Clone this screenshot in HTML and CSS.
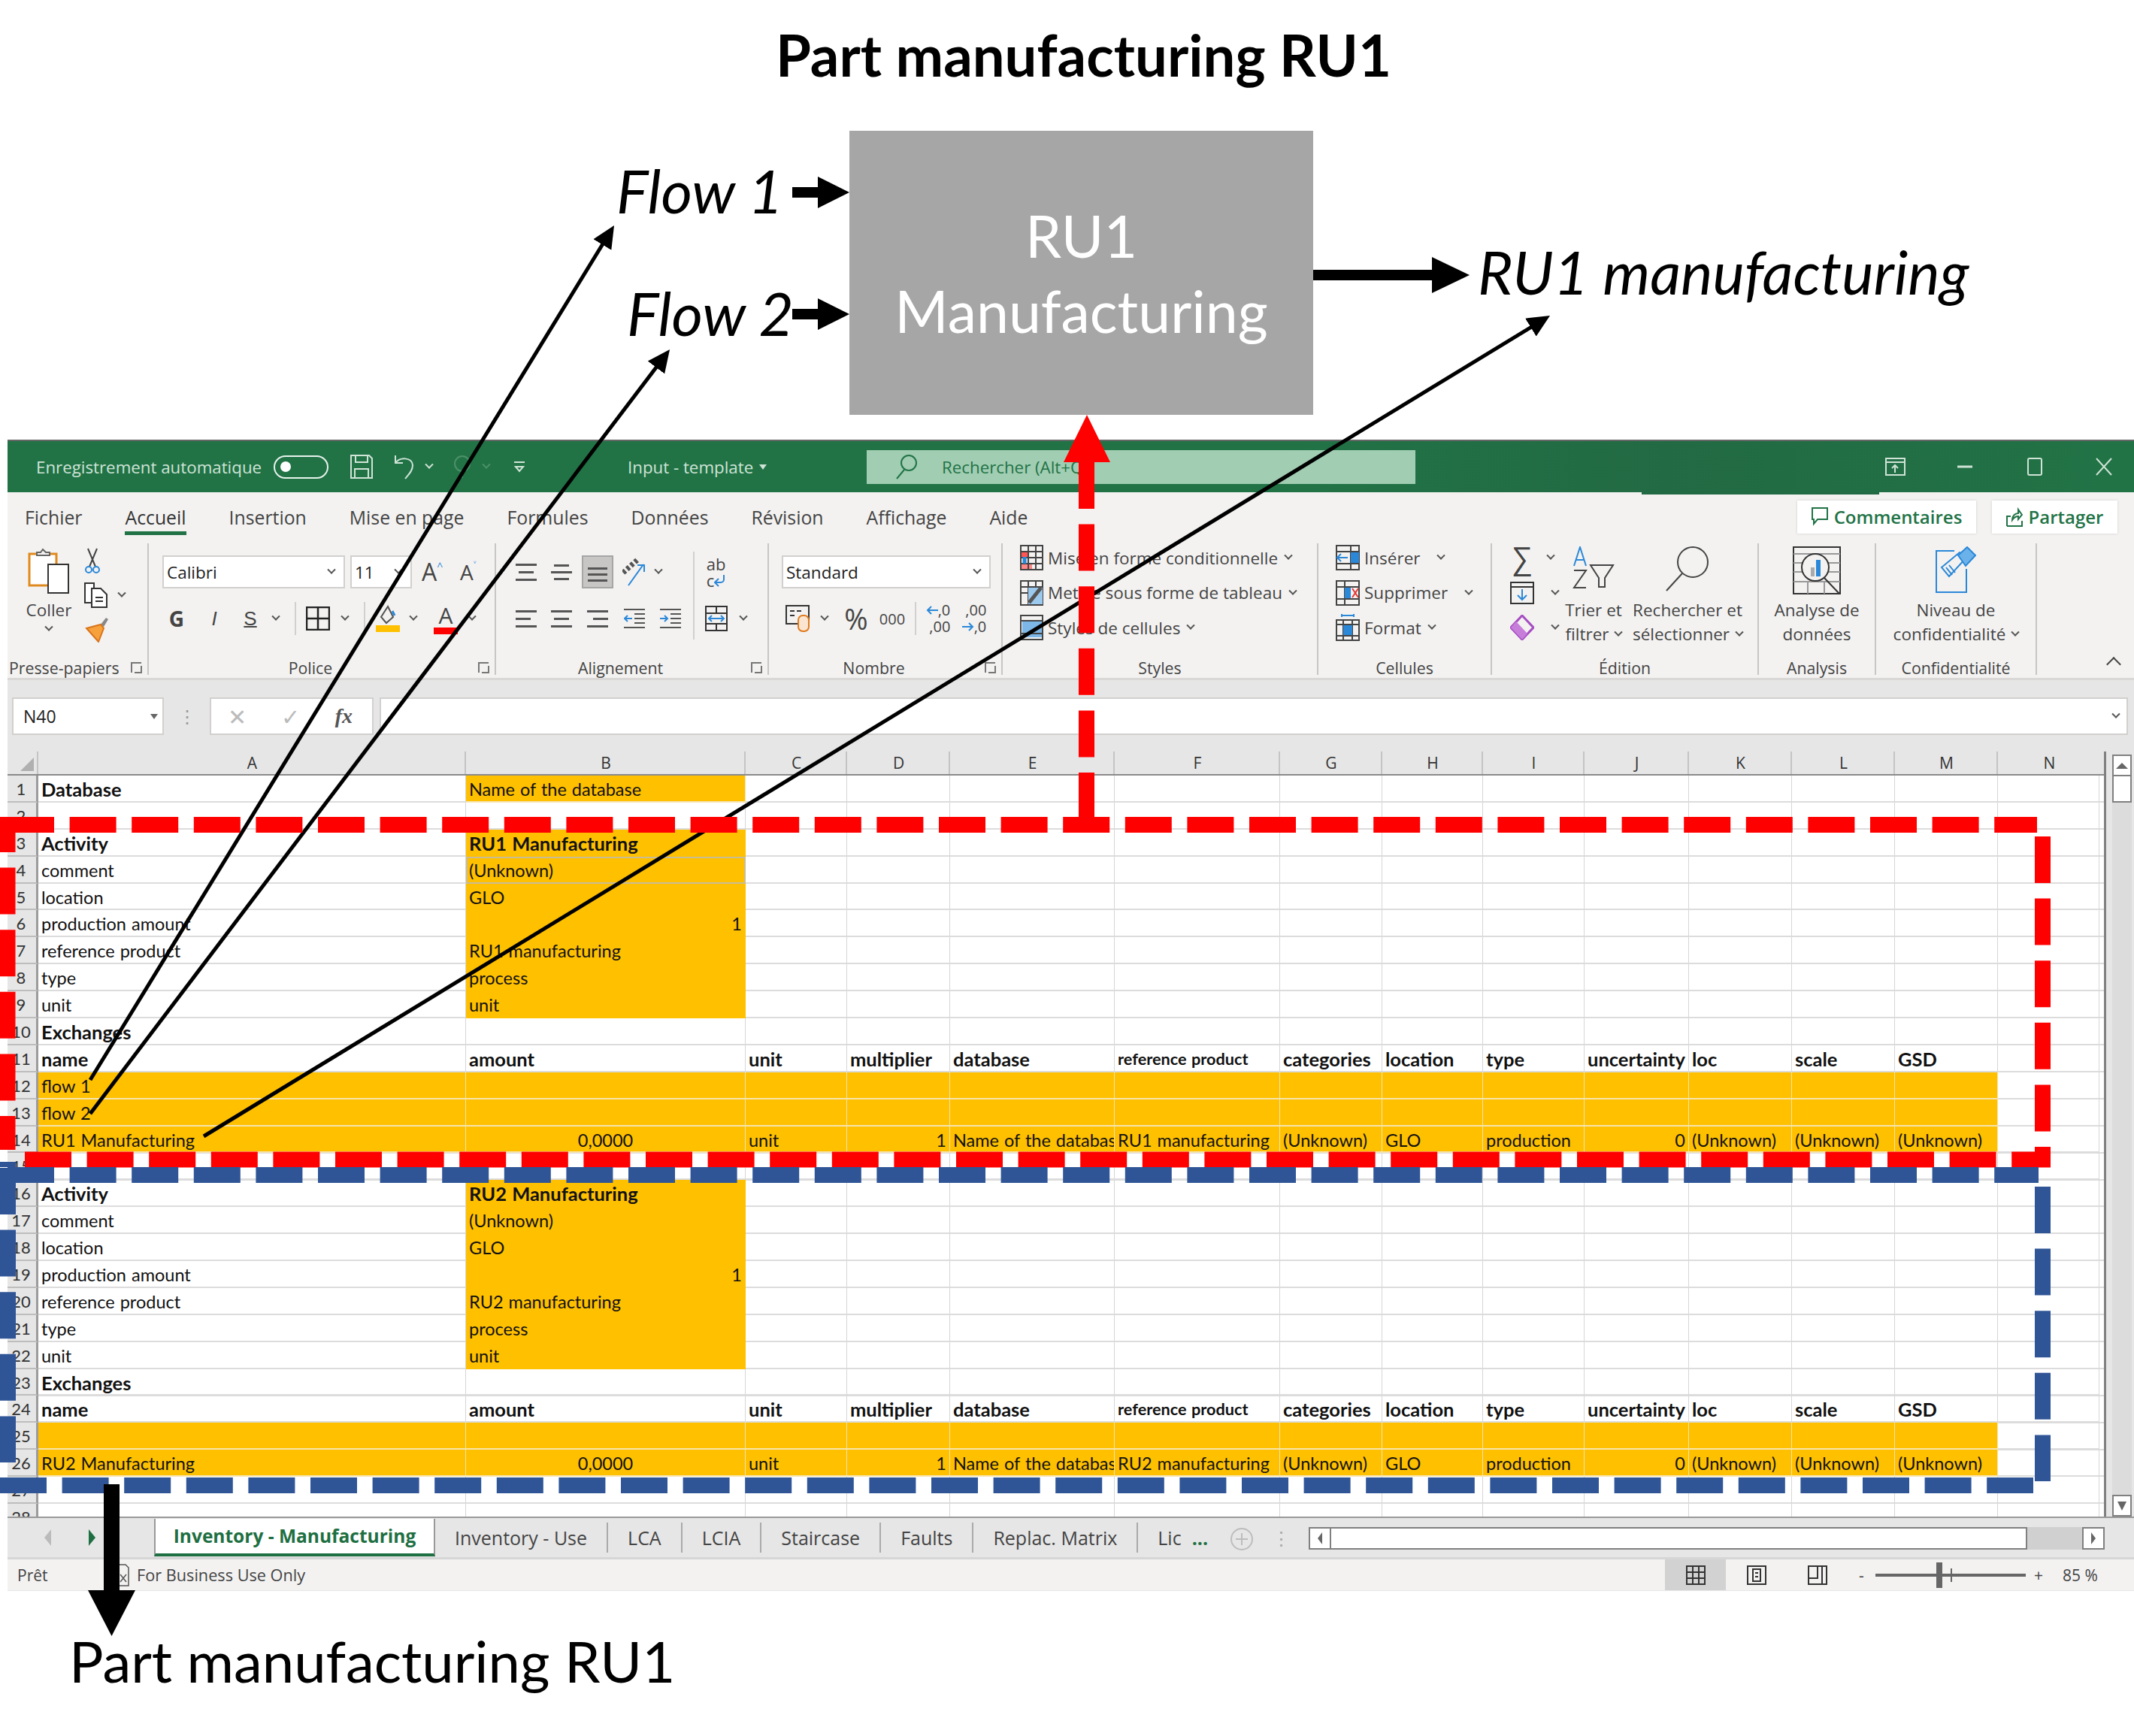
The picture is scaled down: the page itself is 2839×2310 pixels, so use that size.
FILE: index.html
```html
<!DOCTYPE html>
<html>
<head>
    <meta charset="UTF-8">
    <title>Part manufacturing RU1</title>
    <link rel="stylesheet" href="styles.css">
</head>
<body>
<div class="page">
    <!-- diagram above the sheet -->
    <div class="top">
        <h1 class="title">Part manufacturing RU1</h1>
        <div class="ru-box">RU1<br>Manufacturing</div>
        <div class="lbl lbl-flow1">Flow 1</div>
        <div class="lbl lbl-flow2">Flow 2</div>
        <div class="lbl lbl-out">RU1 manufacturing</div>
    </div>

    <div class="excel">
        <!-- title bar -->
        <div class="titlebar">
            <div class="tb-left">
                <span class="auto-label">Enregistrement automatique</span>
                <span class="toggle"><i></i></span>
                <svg class="ic-save" width="30" height="32" viewBox="0 0 30 32" fill="none" stroke="#cfe3d6" stroke-width="2"><path d="M1 1h24l4 4v26H1z"/><path d="M7 1v9h16V1M6 31V19h18v12"/></svg>
                <svg class="ic-undo" width="28" height="34" viewBox="0 0 28 34" fill="none" stroke="#cfe3d6" stroke-width="2"><path d="M2 2v10h10"/><path d="M2 12c6-8 22-8 23 3 0 8-6 13-10 18"/></svg>
                <span class="chev chev-light chev-undo"></span>
                <svg class="ic-redo" width="25" height="32" viewBox="0 0 25 32" fill="none" stroke="#4c9069" stroke-width="2"><circle cx="12" cy="12" r="10"/><path d="M12 22v9"/></svg>
                <span class="chev chev-dim chev-redo"></span>
                <svg width="14" height="16" viewBox="0 0 14 16" fill="none" stroke="#cfe3d6" stroke-width="2"><path d="M0 2h14M2 8l5 6 5-6z"/></svg>
            </div>
            <div class="tb-file">Input - template <span class="caret"></span></div>
            <div class="search">
                <svg width="30" height="34" viewBox="0 0 30 34" fill="none" stroke="#217346" stroke-width="2"><circle cx="18" cy="12" r="10"/><path d="M12 21L2 33"/></svg>
                <span>Rechercher (Alt+Q)</span>
            </div>
            <div class="tb-right">
                <svg width="27" height="24" viewBox="0 0 27 24" fill="none" stroke="#cfe3d6" stroke-width="2"><path d="M1 1h25v22H1zM1 6h25M13 20V10M9 14l4-4 4 4"/></svg>
                <svg class="win-min" width="20" height="4" viewBox="0 0 20 4"><path d="M0 2h20" stroke="#cfe3d6" stroke-width="3"/></svg>
                <svg class="win-max" width="20" height="24" viewBox="0 0 20 24" fill="none" stroke="#cfe3d6" stroke-width="2"><rect x="1" y="1" width="18" height="22" rx="2"/></svg>
                <svg class="win-close" width="22" height="24" viewBox="0 0 22 24" fill="none" stroke="#cfe3d6" stroke-width="2"><path d="M1 1l20 22M21 1L1 23"/></svg>
            </div>
        </div>

        <!-- ribbon tabs -->
        <div class="tabs">
            <span class="tab">Fichier</span>
            <span class="tab tab-on">Accueil</span>
            <span class="tab">Insertion</span>
            <span class="tab">Mise en page</span>
            <span class="tab">Formules</span>
            <span class="tab">Données</span>
            <span class="tab">Révision</span>
            <span class="tab">Affichage</span>
            <span class="tab">Aide</span>
            <span class="tab-btns">
                <span class="share share-c">
                    <svg width="22" height="26" viewBox="0 0 22 26" fill="none" stroke="#217346" stroke-width="2"><path d="M1 1h20v15H8l-5 6v-6H1z"/></svg>
                    Commentaires
                </span>
                <span class="share share-p">
                    <svg width="22" height="26" viewBox="0 0 22 26" fill="none" stroke="#217346" stroke-width="2"><path d="M1 25V12h5M1 25h20v-7M8 17c0-6 4-9 8-9V3l5 7-5 6v-4c-3 0-6 2-8 5z"/></svg>
                    Partager
                </span>
            </span>
        </div>

        <!-- ribbon -->
        <div class="ribbon">
            <!-- Presse-papiers -->
            <div class="grp grp-clip">
                <div class="grp-body clip-body">
                    <div class="paste">
                        <svg width="56" height="62" viewBox="0 0 56 62" fill="none"><path d="M2 8h36v42H2z" fill="#fff" stroke="#e08a1e" stroke-width="3"/><path d="M12 10V6h5l3-4 4 4h5v4z" fill="#f3f2f1" stroke="#666" stroke-width="2"/><rect x="27" y="22" width="27" height="38" fill="#fff" stroke="#333" stroke-width="2"/></svg>
                        <span class="paste-lbl">Coller</span>
                        <span class="chev"></span>
                    </div>
                    <div class="clip-tools">
                        <svg width="22" height="34" viewBox="0 0 22 34" fill="none"><path d="M5 1l10 24M17 1L7 25" stroke="#444" stroke-width="2"/><circle cx="6" cy="29" r="4" stroke="#2b88d8" stroke-width="2"/><circle cx="16" cy="29" r="4" stroke="#2b88d8" stroke-width="2"/></svg>
                        <span class="copy-row">
                            <svg width="32" height="34" viewBox="0 0 32 34" fill="#fff" stroke="#333" stroke-width="2"><path d="M1 1h12v26H1z"/><path d="M10 8h12l8 8v17H10z"/><path d="M15 20h10M15 25h10" fill="none"/></svg>
                            <span class="chev"></span>
                        </span>
                        <svg width="32" height="34" viewBox="0 0 32 34"><path d="M22 10l7-9 3 2-6 10z" fill="#888"/><path d="M3 15l19-5 4 5-7 18z" fill="#f7a13c" stroke="#d9741a" stroke-width="2"/></svg>
                    </div>
                </div>
                <div class="grp-foot"><span class="grp-label grp-label-left">Presse-papiers</span><span class="launch"></span></div>
            </div>

            <!-- Police -->
            <div class="grp grp-font">
                <div class="grp-body">
                    <div class="font-row1">
                        <span class="combo combo-font">Calibri<span class="chev"></span></span>
                        <span class="combo combo-size">11<span class="chev"></span></span>
                        <span class="grow">A<sup>^</sup></span>
                        <span class="shrink">A<sup>˅</sup></span>
                    </div>
                    <div class="font-row2">
                        <b class="fmt-g">G</b>
                        <i class="fmt-i">I</i>
                        <u class="fmt-s">S</u>
                        <span class="chev"></span>
                        <span class="tsep"></span>
                        <svg width="32" height="32" viewBox="0 0 32 32" fill="none" stroke="#222" stroke-width="2.5"><path d="M1 1h30v30H1zM16 1v30M1 16h30"/></svg>
                        <span class="chev"></span>
                        <span class="tsep"></span>
                        <svg width="32" height="36" viewBox="0 0 32 36"><path d="M16 2L7 16l7 8 9-8z" fill="none" stroke="#555" stroke-width="2"/><path d="M22 8l3 6" stroke="#2b88d8" stroke-width="3"/><rect y="27" width="32" height="9" fill="#ffc000"/></svg>
                        <span class="chev"></span>
                        <span class="font-color">A<em></em></span>
                        <span class="chev"></span>
                    </div>
                </div>
                <div class="grp-foot"><span class="grp-label">Police</span><span class="launch"></span></div>
            </div>

            <!-- Alignement -->
            <div class="grp grp-align">
                <div class="grp-body align-grid">
                    <span class="al"><em></em><em class="s"></em><em></em></span>
                    <span class="al al-mid"><em class="s"></em><em></em><em class="s"></em></span>
                    <span class="al al-sel"><em></em><em></em><em class="s"></em></span>
                    <svg width="32" height="40" viewBox="0 0 32 40" fill="none"><path d="M1 21L21 3" stroke="#555" stroke-width="7" stroke-dasharray="4 3"/><path d="M8 38L28 10M20 11h9v9" stroke="#2b88d8" stroke-width="2"/></svg>
                    <span class="chev chev-orient"></span>
                    <span class="tsep tsep-tall"></span>
                    <span class="wrap-ic">ab<br>c<svg width="16" height="16" viewBox="0 0 16 16" fill="none" stroke="#2b88d8" stroke-width="2"><path d="M13 0v6a4 4 0 0 1-4 4H1M6 5l-5 5 5 5"/></svg></span>
                    <span></span>

                    <span class="al al-l"><em></em><em class="s"></em><em></em></span>
                    <span class="al"><em></em><em class="s"></em><em></em></span>
                    <span class="al al-r"><em></em><em class="s"></em><em></em></span>
                    <svg width="28" height="28" viewBox="0 0 28 28" fill="none" stroke="#555" stroke-width="2"><path d="M0 2h28M14 14h14M14 20h14M0 26h28M14 8h14"/><path d="M11 14H1M5 10l-4 4 4 4" stroke="#2b88d8"/></svg>
                    <svg width="28" height="28" viewBox="0 0 28 28" fill="none" stroke="#555" stroke-width="2"><path d="M0 2h28M14 14h14M14 20h14M0 26h28M14 8h14"/><path d="M0 14h10M6 10l4 4-4 4" stroke="#2b88d8"/></svg>
                    <svg width="30" height="34" viewBox="0 0 30 34" fill="none" stroke="#333" stroke-width="2"><path d="M1 1h28v32H1zM1 10h28M1 24h28M15 1v9M15 24v9"/><path d="M5 17h20M9 13l-4 4 4 4M21 13l4 4-4 4" stroke="#2b88d8"/></svg>
                    <span class="chev"></span>
                </div>
                <div class="grp-foot"><span class="grp-label">Alignement</span><span class="launch"></span></div>
            </div>

            <!-- Nombre -->
            <div class="grp grp-num">
                <div class="grp-body">
                    <div class="num-row1"><span class="combo combo-num">Standard<span class="chev"></span></span></div>
                    <div class="num-row2">
                        <svg width="34" height="36" viewBox="0 0 34 36"><rect x="1" y="1" width="30" height="24" fill="none" stroke="#333" stroke-width="2"/><path d="M6 8h6M6 14h6M15 8h6" stroke="#333" stroke-width="2"/><rect x="17" y="14" width="14" height="21" rx="6" fill="#fbe5d0" stroke="#e07a1e" stroke-width="2"/></svg>
                        <span class="chev"></span>
                        <span class="pct">%</span>
                        <span class="thou">000</span>
                        <span class="tsep"></span>
                        <span class="dec"><span><svg width="16" height="14" viewBox="0 0 16 14" fill="none" stroke="#2b88d8" stroke-width="2"><path d="M16 7H2M7 2L2 7l5 5"/></svg>,0</span><span>,00</span></span>
                        <span class="dec dec-r"><span>,00</span><span><svg width="16" height="14" viewBox="0 0 16 14" fill="none" stroke="#2b88d8" stroke-width="2"><path d="M0 7h14M9 2l5 5-5 5"/></svg>,0</span></span>
                    </div>
                </div>
                <div class="grp-foot"><span class="grp-label">Nombre</span><span class="launch"></span></div>
            </div>

            <!-- Styles -->
            <div class="grp grp-styles">
                <div class="grp-body rows3">
                    <div class="line">
                        <svg width="31" height="34" viewBox="0 0 31 34" fill="none" stroke="#444" stroke-width="2"><rect x="2" y="8" width="9" height="8" fill="#f55" stroke="none"/><rect x="2" y="24" width="14" height="8" fill="#f88" stroke="none"/><path d="M1 1h29v32H1zM11 1v32M21 1v32M1 9h29M1 17h29M1 25h29"/><path d="M6 16v9" stroke="#2b88d8" stroke-width="5"/></svg>
                        Mise en forme conditionnelle<span class="chev"></span>
                    </div>
                    <div class="line">
                        <svg width="31" height="34" viewBox="0 0 31 34" fill="none" stroke="#444" stroke-width="2"><path d="M1 1h29v32H1zM11 1v32M21 1v32M1 9h29M1 17h29"/><rect x="11" y="10" width="19" height="22" fill="#9cc9ee" stroke="none"/><path d="M12 30L28 10" stroke="#555" stroke-width="5"/></svg>
                        Mettre sous forme de tableau<span class="chev"></span>
                    </div>
                    <div class="line">
                        <svg width="31" height="34" viewBox="0 0 31 34" fill="none" stroke="#444" stroke-width="2"><rect x="3" y="8" width="26" height="22" fill="#7db7e8" stroke="none"/><path d="M1 1h29v32H1zM1 8h29M1 25h29"/></svg>
                        Styles de cellules<span class="chev"></span>
                    </div>
                </div>
                <div class="grp-foot grp-foot-c"><span class="grp-label">Styles</span></div>
            </div>

            <!-- Cellules -->
            <div class="grp grp-cells">
                <div class="grp-body rows3">
                    <div class="line">
                        <svg width="32" height="34" viewBox="0 0 32 34" fill="none" stroke="#444" stroke-width="2"><path d="M1 1h30v32H1zM1 9h30M1 25h30M20 1v32"/><rect x="20" y="10" width="11" height="14" fill="#2b88d8" stroke="none"/><path d="M16 17H2M7 12l-5 5 5 5" stroke="#2b88d8"/></svg>
                        Insérer<span class="chev chev-far"></span>
                    </div>
                    <div class="line">
                        <svg width="32" height="34" viewBox="0 0 32 34" fill="none" stroke="#444" stroke-width="2"><path d="M1 1h30v32H1zM1 9h30M1 25h30M12 1v32"/><rect x="12" y="10" width="8" height="14" fill="#2b88d8" stroke="none"/><path d="M22 11l8 12M30 11l-8 12" stroke="#e53935"/></svg>
                        Supprimer<span class="chev chev-far"></span>
                    </div>
                    <div class="line">
                        <svg width="32" height="36" viewBox="0 0 32 36" fill="none" stroke="#444" stroke-width="2"><path d="M1 8h30v27H1zM1 14h30M1 29h30M10 8v27M22 8v27"/><path d="M8 2h16M8 0v4M24 0v4" stroke="#2b88d8"/><rect x="10" y="15" width="12" height="13" fill="#2b88d8" stroke="none"/></svg>
                        Format<span class="chev"></span>
                    </div>
                </div>
                <div class="grp-foot grp-foot-c"><span class="grp-label">Cellules</span></div>
            </div>

            <!-- Edition -->
            <div class="grp grp-edit">
                <div class="grp-body edit-body">
                    <div class="edit-col rows3">
                        <div class="line">
                            <span class="sigma">∑</span><span class="chev"></span>
                        </div>
                        <div class="line">
                            <svg width="32" height="30" viewBox="0 0 32 30" fill="none" stroke="#333" stroke-width="2"><path d="M1 1h30v28H1zM1 7h30"/><path d="M16 10v14M10 18l6 6 6-6" stroke="#2b88d8"/></svg>
                            <span class="chev"></span>
                        </div>
                        <div class="line">
                            <svg width="32" height="34" viewBox="0 0 32 34" fill="none"><path d="M16 1l15 16-15 16L1 17z" stroke="#a64dc2" stroke-width="3"/><path d="M1 17L8 9l15 16-7 8z" fill="#c77edb"/></svg>
                            <span class="chev"></span>
                        </div>
                    </div>
                    <div class="big big-sort">
                        <span class="big-ic">
                            <svg width="56" height="56" viewBox="0 0 56 56" fill="none"><path d="M2 26L10 1l8 25M5 18h10" stroke="#2b88d8" stroke-width="2"/><path d="M2 32h16L2 55h16" stroke="#444" stroke-width="2"/><path d="M24 25h30L43 42v12h-8V42z" stroke="#444" stroke-width="2"/></svg>
                        </span>
                        <span>Trier et</span>
                        <span>filtrer<span class="chev chev-near"></span></span>
                    </div>
                    <div class="big big-find">
                        <span class="big-ic">
                            <svg width="60" height="60" viewBox="0 0 60 60" fill="none" stroke="#444" stroke-width="2"><circle cx="37" cy="21" r="20"/><path d="M23 36L2 59"/></svg>
                        </span>
                        <span>Rechercher et</span>
                        <span>sélectionner<span class="chev chev-near"></span></span>
                    </div>
                </div>
                <div class="grp-foot grp-foot-c"><span class="grp-label">Édition</span></div>
            </div>

            <!-- Analysis -->
            <div class="grp grp-analysis">
                <div class="grp-body big">
                    <span class="big-ic">
                        <svg width="64" height="64" viewBox="0 0 64 64" fill="none" stroke="#333" stroke-width="2"><path d="M1 1h62v62H1z"/><path d="M1 10h62M1 22h62M1 34h62M1 47h62M20 47v16M42 47v16" stroke="#999"/><circle cx="30" cy="28" r="18" fill="#f3f2f1"/><rect x="24" y="28" width="5" height="12" fill="#aaa" stroke="none"/><rect x="31" y="18" width="6" height="22" fill="#2b88d8" stroke="none"/><path d="M42 42l20 21"/></svg>
                    </span>
                    <span>Analyse de</span>
                    <span>données</span>
                </div>
                <div class="grp-foot grp-foot-c"><span class="grp-label">Analysis</span></div>
            </div>

            <!-- Confidentialite -->
            <div class="grp grp-conf">
                <div class="grp-body big">
                    <span class="big-ic">
                        <svg width="54" height="62" viewBox="0 0 54 62" fill="none" stroke="#2b88d8" stroke-width="2"><path d="M25 6H1v55h40V30"/><path d="M8 28L32 8l8 8-22 24z" fill="#f3f2f1"/><path d="M30 12L42 1l11 11-13 14z" fill="#6bb2ea"/><path d="M14 28l8 10M18 25l8 10"/></svg>
                    </span>
                    <span>Niveau de</span>
                    <span>confidentialité<span class="chev chev-near"></span></span>
                </div>
                <div class="grp-foot grp-foot-c"><span class="grp-label">Confidentialité</span></div>
            </div>

            <div class="ribbon-end"><span class="collapse"></span></div>
        </div>

        <!-- formula bar -->
        <div class="formula">
            <span class="namebox">N40<span class="caret caret-dark"></span></span>
            <span class="vdots">⋮</span>
            <span class="fxbox"><span class="fx-x">✕</span><span class="fx-v">✓</span><span class="fx-f">fx</span></span>
            <span class="fxinput"><span class="chev"></span></span>
        </div>

        <!-- sheet -->
        <div class="sheet-wrap">
            <div class="sheet">
                <div class="colheads">
                    <span class="corner"><i></i></span><span>A</span><span>B</span><span>C</span><span>D</span><span>E</span><span>F</span><span>G</span><span>H</span><span>I</span><span>J</span><span>K</span><span>L</span><span>M</span><span>N</span>
                </div>
                <div class="cells">
                    <b>1</b><span class="bd">Database</span><span class="fill">Name of the database</span><span></span><span></span><span></span><span></span><span></span><span></span><span></span><span></span><span></span><span></span><span></span><span></span>
                    <b>2</b><span></span><span></span><span></span><span></span><span></span><span></span><span></span><span></span><span></span><span></span><span></span><span></span><span></span><span></span>
                    <b>3</b><span class="bd">Activity</span><span class="solid bd">RU1 Manufacturing</span><span></span><span></span><span></span><span></span><span></span><span></span><span></span><span></span><span></span><span></span><span></span><span></span>
                    <b>4</b><span>comment</span><span class="solid boxed">(Unknown)</span><span></span><span></span><span></span><span></span><span></span><span></span><span></span><span></span><span></span><span></span><span></span><span></span>
                    <b>5</b><span>location</span><span class="solid">GLO</span><span></span><span></span><span></span><span></span><span></span><span></span><span></span><span></span><span></span><span></span><span></span><span></span>
                    <b>6</b><span>production amount</span><span class="solid num">1</span><span></span><span></span><span></span><span></span><span></span><span></span><span></span><span></span><span></span><span></span><span></span><span></span>
                    <b>7</b><span>reference product</span><span class="solid">RU1 manufacturing</span><span></span><span></span><span></span><span></span><span></span><span></span><span></span><span></span><span></span><span></span><span></span><span></span>
                    <b>8</b><span>type</span><span class="solid">process</span><span></span><span></span><span></span><span></span><span></span><span></span><span></span><span></span><span></span><span></span><span></span><span></span>
                    <b>9</b><span>unit</span><span class="solid">unit</span><span></span><span></span><span></span><span></span><span></span><span></span><span></span><span></span><span></span><span></span><span></span><span></span>
                    <b>10</b><span class="bd">Exchanges</span><span></span><span></span><span></span><span></span><span></span><span></span><span></span><span></span><span></span><span></span><span></span><span></span><span></span>
                    <b>11</b><span class="bd">name</span><span class="bd">amount</span><span class="bd">unit</span><span class="bd">multiplier</span><span class="bd">database</span><span class="bd sm">reference product</span><span class="bd">categories</span><span class="bd">location</span><span class="bd">type</span><span class="bd">uncertainty</span><span class="bd">loc</span><span class="bd">scale</span><span class="bd">GSD</span><span></span>
                    <b>12</b><span class="fill">flow 1</span><span class="fill"></span><span class="fill"></span><span class="fill"></span><span class="fill"></span><span class="fill"></span><span class="fill"></span><span class="fill"></span><span class="fill"></span><span class="fill"></span><span class="fill"></span><span class="fill"></span><span class="fill"></span><span></span>
                    <b>13</b><span class="fill">flow 2</span><span class="fill"></span><span class="fill"></span><span class="fill"></span><span class="fill"></span><span class="fill"></span><span class="fill"></span><span class="fill"></span><span class="fill"></span><span class="fill"></span><span class="fill"></span><span class="fill"></span><span class="fill"></span><span></span>
                    <b>14</b><span class="fill">RU1 Manufacturing</span><span class="fill ctr">0,0000</span><span class="fill">unit</span><span class="fill num">1</span><span class="fill">Name of the database</span><span class="fill">RU1 manufacturing</span><span class="fill">(Unknown)</span><span class="fill">GLO</span><span class="fill">production</span><span class="fill num">0</span><span class="fill">(Unknown)</span><span class="fill">(Unknown)</span><span class="fill">(Unknown)</span><span></span>
                    <b>15</b><span></span><span></span><span></span><span></span><span></span><span></span><span></span><span></span><span></span><span></span><span></span><span></span><span></span><span></span>
                    <b>16</b><span class="bd">Activity</span><span class="solid bd">RU2 Manufacturing</span><span></span><span></span><span></span><span></span><span></span><span></span><span></span><span></span><span></span><span></span><span></span><span></span>
                    <b>17</b><span>comment</span><span class="solid">(Unknown)</span><span></span><span></span><span></span><span></span><span></span><span></span><span></span><span></span><span></span><span></span><span></span><span></span>
                    <b>18</b><span>location</span><span class="solid">GLO</span><span></span><span></span><span></span><span></span><span></span><span></span><span></span><span></span><span></span><span></span><span></span><span></span>
                    <b>19</b><span>production amount</span><span class="solid num">1</span><span></span><span></span><span></span><span></span><span></span><span></span><span></span><span></span><span></span><span></span><span></span><span></span>
                    <b>20</b><span>reference product</span><span class="solid">RU2 manufacturing</span><span></span><span></span><span></span><span></span><span></span><span></span><span></span><span></span><span></span><span></span><span></span><span></span>
                    <b>21</b><span>type</span><span class="solid">process</span><span></span><span></span><span></span><span></span><span></span><span></span><span></span><span></span><span></span><span></span><span></span><span></span>
                    <b>22</b><span>unit</span><span class="solid">unit</span><span></span><span></span><span></span><span></span><span></span><span></span><span></span><span></span><span></span><span></span><span></span><span></span>
                    <b>23</b><span class="bd">Exchanges</span><span></span><span></span><span></span><span></span><span></span><span></span><span></span><span></span><span></span><span></span><span></span><span></span><span></span>
                    <b>24</b><span class="bd">name</span><span class="bd">amount</span><span class="bd">unit</span><span class="bd">multiplier</span><span class="bd">database</span><span class="bd sm">reference product</span><span class="bd">categories</span><span class="bd">location</span><span class="bd">type</span><span class="bd">uncertainty</span><span class="bd">loc</span><span class="bd">scale</span><span class="bd">GSD</span><span></span>
                    <b>25</b><span class="fill"></span><span class="fill"></span><span class="fill"></span><span class="fill"></span><span class="fill"></span><span class="fill"></span><span class="fill"></span><span class="fill"></span><span class="fill"></span><span class="fill"></span><span class="fill"></span><span class="fill"></span><span class="fill"></span><span></span>
                    <b>26</b><span class="fill">RU2 Manufacturing</span><span class="fill ctr">0,0000</span><span class="fill">unit</span><span class="fill num">1</span><span class="fill">Name of the database</span><span class="fill">RU2 manufacturing</span><span class="fill">(Unknown)</span><span class="fill">GLO</span><span class="fill">production</span><span class="fill num">0</span><span class="fill">(Unknown)</span><span class="fill">(Unknown)</span><span class="fill">(Unknown)</span><span></span>
                    <b>27</b><span></span><span></span><span></span><span></span><span></span><span></span><span></span><span></span><span></span><span></span><span></span><span></span><span></span><span></span>
                    <b>28</b><span></span><span></span><span></span><span></span><span></span><span></span><span></span><span></span><span></span><span></span><span></span><span></span><span></span><span></span>
                </div>
            </div>
            <div class="vscroll">
                <span class="vbtn"><i class="tri-up"></i></span>
                <span class="vthumb"></span>
                <span class="vtrack"></span>
                <span class="vbtn"><i class="tri-down"></i></span>
            </div>
        </div>

        <!-- sheet tabs -->
        <div class="sheetbar">
            <div class="nav"><i class="nav-l"></i><i class="nav-r"></i></div>
            <div class="stabs">
                <span class="stab stab-on">Inventory - Manufacturing</span>
                <span class="stab">Inventory - Use</span>
                <span class="stab">LCA</span>
                <span class="stab">LCIA</span>
                <span class="stab">Staircase</span>
                <span class="stab">Faults</span>
                <span class="stab">Replac. Matrix</span>
                <span class="stab stab-last">Lic<em>...</em></span>
            </div>
            <svg class="plus" width="32" height="32" viewBox="0 0 32 32" fill="none" stroke="#bdbdbd" stroke-width="2"><circle cx="16" cy="16" r="14"/><path d="M16 8v16M8 16h16"/></svg>
            <span class="hdots">⋮</span>
            <div class="hscroll">
                <span class="hbtn"><i class="tri-left"></i></span>
                <span class="hthumb"></span>
                <span class="htrack"></span>
                <span class="hbtn"><i class="tri-right"></i></span>
            </div>
        </div>

        <!-- status bar -->
        <div class="status">
            <span class="st-ready">Prêt</span>
            <svg width="16" height="34" viewBox="0 0 16 34" fill="none" stroke="#555" stroke-width="1.5"><path d="M1 3h10l4 4v24H1z"/><path d="M4 16l8 10M12 16l-8 10"/></svg>
            <span class="st-biz">For Business Use Only</span>
            <span class="st-views">
                <span class="st-view st-view-on"><svg width="26" height="26" viewBox="0 0 26 26" fill="none" stroke="#333" stroke-width="2"><path d="M1 1h24v24H1zM9 1v24M17 1v24M1 9h24M1 17h24"/></svg></span>
                <span class="st-view"><svg width="26" height="26" viewBox="0 0 26 26" fill="none" stroke="#333" stroke-width="2"><path d="M1 1h24v24H1zM8 5h10v16H8z"/><path d="M11 10h4M11 15h4"/></svg></span>
                <span class="st-view"><svg width="26" height="26" viewBox="0 0 26 26" fill="none" stroke="#333" stroke-width="2"><path d="M1 1h24v24H1zM1 17h12V1M19 1v24"/></svg></span>
            </span>
            <span class="zoom-m">-</span>
            <span class="slider"><i></i><em></em></span>
            <span class="zoom-p">+</span>
            <span class="zoom-v">85 %</span>
        </div>
    </div>

    <div class="caption">Part manufacturing RU1</div>

    <!-- arrows and dashed frames drawn over the whole page -->
    <svg class="overlay" width="2839" height="2310" viewBox="0 0 2839 2310" fill="none">
        <defs>
            <marker id="head" markerUnits="userSpaceOnUse" markerWidth="30" markerHeight="30" refX="20" refY="15" orient="auto">
                <path d="M0 1L30 15L0 29z" fill="#000"/>
            </marker>
        </defs>
        <g stroke="#000" stroke-width="5">
            <path d="M120 1437L811.8 308.5" marker-end="url(#head)"/>
            <path d="M120 1482L885 473" marker-end="url(#head)"/>
            <path d="M271 1512L2053.5 425.2" marker-end="url(#head)"/>
        </g>
        <path d="M1054 256h34M1054 418h34" stroke="#000" stroke-width="14"/>
        <path d="M1088 235L1130 256L1088 277zM1088 397L1130 418L1088 439z" fill="#000"/>
        <path d="M1747 366h160" stroke="#000" stroke-width="14"/>
        <path d="M1905 342L1955 366L1905 390z" fill="#000"/>

        <g stroke="#f00" stroke-width="21" stroke-dasharray="62 20.6">
            <path d="M1445.5 615V1087"/>
            <path d="M10 1097.5H2710"/>
            <path d="M2717.5 1113V1553"/>
            <path d="M33 1543H2728"/>
            <path d="M10 1087V1530" stroke-dashoffset="15"/>
        </g>
        <path d="M1446 552L1477 615H1415z" fill="#f00"/>

        <g stroke="#2f5597" stroke-width="21" stroke-dasharray="62 20.6">
            <path d="M10 1563.5H2712"/>
            <path d="M2717.5 1579V1971"/>
            <path d="M0 1976.5H2705"/>
            <path d="M10.5 1554V1946"/>
        </g>
        <path d="M10.5 1553V1546" stroke="#2f5597" stroke-width="21"/>

        <path d="M148.5 1975V2120" stroke="#000" stroke-width="21"/>
        <path d="M117 2116H180L148.5 2177z" fill="#000"/>
    </svg>
</div>
</body>
</html>
```

FILE: styles.css
```css
*{box-sizing: border-box;}
html,body{margin: 0;padding: 0;background: #fff;}
.page{position: relative;width: 2839px;height: 2310px;overflow: hidden;font-family: "Open Sans","Noto Sans",sans-serif;color: #444;}

/* diagram */
.top{position: relative;height: 585px;font-family: Lato,"Liberation Sans",sans-serif;color: #000;}
.title{margin: 0;padding-top: 28px;padding-left: 44px;text-align: center;font-size: 76px;line-height: 90px;font-weight: 700;}
.ru-box{position: absolute;left: 1130px;top: 174px;width: 617px;height: 378px;background: #a6a6a6;color: #fff;font-size: 77px;line-height: 100px;text-align: center;padding-top: 89px;}
.lbl{position: absolute;font-size: 80px;line-height: 90px;font-style: italic;white-space: nowrap;}
.lbl-flow1{left: 820px;top: 208px;}
.lbl-flow2{left: 834px;top: 371px;}
.lbl-out{left: 1966px;top: 316px;}

.overlay{position: absolute;left: 0;top: 0;pointer-events: none;}
.caption{padding: 48px 0 0 92px;font-family: Lato,"Liberation Sans",sans-serif;font-size: 76px;line-height: 90px;color: #000;}

/* excel window */
.excel{margin-left: 10px;width: 2829px;height: 1532px;display: flex;flex-direction: column;background: #e6e6e6;font-size: 21px;}

.titlebar{position: relative;height: 70px;flex: none;display: flex;align-items: center;background: linear-gradient(90deg,#217346 0,#217346 60%,#226a43 78%,#217346 100%);border-top: 2px solid #666;color: #cfe3d6;font-size: 22.3px;}
.titlebar::after{content: "";position: absolute;left: 2174px;top: 68px;width: 316px;height: 3px;background: #226a43;}
.tb-left{width: 825px;flex: none;display: flex;align-items: center;padding-left: 38px;}
.auto-label{width: 316px;white-space: nowrap;}
.toggle{width: 73px;height: 31px;border: 2px solid #e8f2ec;border-radius: 16px;margin-right: 29px;display: flex;align-items: center;padding-left: 7px;}
.toggle i{width: 14px;height: 14px;border-radius: 50%;background: #fff;}
.ic-save{margin-right: 28px;}
.ic-undo{margin-right: 15px;}
.chev-undo{margin-right: 28px;}
.ic-redo{margin-right: 15px;}
.chev-redo{margin-right: 33px;}
.tb-file{width: 318px;flex: none;white-space: nowrap;display: flex;align-items: center;gap: 8px;}
.caret{display: inline-block;width: 0;height: 0;border-left: 5px solid transparent;border-right: 5px solid transparent;border-top: 7px solid #cfe3d6;}
.search{width: 730px;height: 45px;flex: none;background: #a1cdb2;color: #217346;display: flex;align-items: center;gap: 32px;padding-left: 38px;white-space: nowrap;}
.tb-right{flex: 1;display: flex;align-items: center;padding-left: 625px;}
.win-min{margin-left: 69px;}
.win-max{margin-left: 73px;}
.win-close{margin-left: 71px;}

.chev{display: inline-block;flex: none;width: 8px;height: 8px;border-right: 2px solid #555;border-bottom: 2px solid #555;transform: rotate(45deg) translate(-2px,-2px);}
.chev-light{border-color: #cfe3d6;}
.chev-dim{border-color: #4c9069;}
.chev-near{margin-left: 9px;}
.chev-far{margin-left: 24px;}

.tabs{height: 65px;flex: none;display: flex;align-items: center;gap: 57px;padding-left: 23px;padding-right: 22px;background: #f3f2f1;font-size: 24.8px;}
.tab{position: relative;white-space: nowrap;}
.tab-on{color: #333;}
.tab-on::after{content: "";position: absolute;left: 0;right: 0;bottom: -7px;height: 5px;background: #217346;}
.tab-btns{margin-left: auto;display: flex;gap: 21px;}
.share{height: 44px;background: #fff;box-shadow: 0 0 3px #ccc;color: #217346;font-size: 24px;font-weight: 600;display: flex;align-items: center;gap: 8px;white-space: nowrap;justify-content: center;}
.share-c{width: 238px;}
.share-p{width: 167px;}

.ribbon{height: 185px;flex: none;display: flex;background: #f3f2f1;border-bottom: 3px solid #d9d8d6;font-size: 22.5px;}
.grp{height: 175px;margin-top: 3px;flex: none;display: flex;flex-direction: column;border-right: 2px solid #c8c6c4;}
.grp-body{height: 155px;flex: none;}
.grp-foot{height: 20px;flex: none;display: flex;align-items: center;font-size: 21.3px;}
.grp-label{flex: 1;text-align: center;white-space: nowrap;}
.grp-label-left{text-align: left;padding-left: 2px;}
.grp-foot-c .grp-label{width: 100%;}
.launch{flex: none;width: 14px;height: 14px;margin: 0 8px 0 8px;border-left: 2px solid #777;border-top: 2px solid #777;position: relative;}
.launch::after{content: "";position: absolute;right: -1px;bottom: -1px;width: 8px;height: 8px;border-right: 2px solid #777;border-bottom: 2px solid #777;}
.grp-clip{width: 188px;}
.grp-font{width: 462px;}
.grp-align{width: 363px;}
.grp-num{width: 311px;}
.grp-styles{width: 420px;}
.grp-cells{width: 231px;}
.grp-edit{width: 355px;}
.grp-analysis{width: 156px;}
.grp-conf{width: 214px;}
.ribbon-end{flex: 1;height: 175px;display: flex;align-items: flex-end;justify-content: flex-end;padding: 0 20px 4px 0;}
.collapse{width: 14px;height: 14px;border-left: 2px solid #444;border-top: 2px solid #444;transform: rotate(45deg);}

/* presse-papiers */
.clip-body{display: flex;padding: 6px 0 0 14px;}
.paste{width: 82px;display: flex;flex-direction: column;align-items: center;}
.paste-lbl{margin-top: 6px;line-height: 30px;}
.paste .chev{margin-top: 6px;}
.clip-tools{margin-left: 6px;height: 126px;display: flex;flex-direction: column;justify-content: space-between;align-items: flex-start;}
.copy-row{display: flex;align-items: center;gap: 14px;}

/* police */
.combo{height: 44px;background: #fff;border: 2px solid #d2d0ce;display: flex;align-items: center;justify-content: space-between;padding: 0 12px 0 4px;color: #222;}
.font-row1{display: flex;align-items: center;padding: 16px 0 0 18px;}
.combo-font{width: 243px;margin-right: 7px;}
.combo-size{width: 82px;margin-right: 13px;}
.grow,.shrink{color: #444;font-size: 32px;line-height: 44px;width: 32px;}
.shrink{margin-left: 19px;font-size: 28px;}
.grow sup,.shrink sup{font-size: 14px;color: #2b88d8;vertical-align: 14px;line-height: 0;}
.font-row2{display: grid;grid-template-columns: 38px 62px 34px 34px 18px 42px 30px 22px 40px 28px 58px 12px;justify-items: center;align-items: center;height: 44px;margin: 18px 0 0 18px;}
.fmt-g,.fmt-i,.fmt-s{font-size: 26px;font-family: "Liberation Sans",sans-serif;text-decoration-thickness: 2px;}
.fmt-g{font-family: "Open Sans",sans-serif;font-weight: 700;font-size: 28px;}
.tsep{display: block;width: 2px;height: 44px;background: #d2d0ce;}
.tsep-tall{grid-row: 1 / 3;grid-column: 6;height: 117px;}
.font-color{display: flex;flex-direction: column;align-items: center;font-size: 30px;line-height: 32px;width: 32px;}
.font-color em{width: 32px;height: 9px;background: #f00;}

/* alignement */
.align-grid{display: grid;grid-template-columns: 48px 46px 50px 48px 48px 14px 46px 26px;grid-template-rows: 44px 44px;row-gap: 18px;justify-items: center;align-items: center;padding: 16px 0 0 16px;align-content: start;}
.al{width: 28px;display: flex;flex-direction: column;gap: 7px;}
.al em{display: block;height: 3px;background: #555;width: 28px;}
.al em.s{width: 20px;margin: 0 4px;}
.al-mid{gap: 6px;}
.al-l em.s{margin: 0;}
.al-r em.s{margin: 0 0 0 8px;}
.al-sel{width: 42px;height: 44px;background: #c8c6c4;border: 2px solid #a6a6a6;padding: 14px 6px 0;gap: 5px;}
.al-sel em,.al-sel em.s{width: 26px;margin: 0;}
.chev-orient{justify-self: start;margin-left: 4px;}
.wrap-ic{font-size: 22px;line-height: 22px;color: #444;}

/* nombre */
.num-row1{padding: 16px 0 0 17px;}
.combo-num{width: 278px;}
.num-row2{display: grid;grid-template-columns: 44px 26px 58px 38px 24px 36px 60px;justify-items: center;align-items: center;height: 44px;margin: 18px 0 0 17px;}
.pct{font-size: 38px;line-height: 44px;}
.thou{font-size: 20px;}
.dec{display: flex;flex-direction: column;align-items: flex-end;font-size: 20px;line-height: 22px;}
.dec span{display: flex;align-items: center;}

/* styles, cellules */
.rows3{display: flex;flex-direction: column;gap: 8.5px;}
.line{height: 38px;display: flex;align-items: center;white-space: nowrap;}
.line .chev{margin-left: 10px;}
.line svg{margin-right: 6px;flex: none;}
.line .chev-far{margin-left: 24px;}
.grp-styles .rows3{padding-left: 23px;}
.grp-cells .rows3{padding-left: 23px;}

/* edition */
.edit-body{display: flex;}
.edit-col{width: 85px;padding-left: 24px;flex: none;}
.edit-col .line{gap: 8px;}
.sigma{width: 32px;font-size: 40px;line-height: 38px;text-align: center;}
.big{display: flex;flex-direction: column;align-items: center;line-height: 32px;white-space: nowrap;}
.big-ic{height: 73px;flex: none;padding-top: 4px;display: block;}
.big-sort{width: 100px;}
.big-find{width: 150px;}
.big > span:not(.big-ic){display: flex;align-items: center;}

/* formula bar */
.formula{height: 95px;flex: none;display: flex;align-items: flex-start;padding-top: 23px;padding-left: 6px;}
.namebox{width: 202px;height: 50px;background: #fff;border: 2px solid #d2d0ce;display: flex;align-items: center;justify-content: space-between;padding: 0 6px 0 13px;color: #222;font-size: 23px;}
.caret-dark{border-top-color: #666;}
.vdots{width: 61px;text-align: center;line-height: 50px;color: #999;font-size: 24px;}
.fxbox{width: 218px;height: 50px;background: #fff;border: 2px solid #d2d0ce;display: flex;align-items: center;justify-content: space-between;padding: 0 26px 0 22px;color: #bbb;font-size: 30px;}
.fx-f{color: #555;font-style: italic;font-family: "Liberation Serif",serif;font-weight: 700;font-size: 28px;}
.fxinput{margin-left: 8px;width: 2326px;height: 50px;background: #fff;border: 2px solid #d2d0ce;display: flex;align-items: center;justify-content: flex-end;padding-right: 10px;}

/* sheet */
.sheet-wrap{height: 1018px;flex: none;display: flex;}
.sheet{width: 2792px;flex: none;border-right: 3px solid #808080;}
.colheads{height: 30px;display: grid;grid-template-columns: 41px 569px 372px 135px 137px 219px 220px 136px 134px 135px 139px 137px 137px 137px 135px;font-size: 21px;color: #333;}
.colheads span{display: flex;align-items: center;justify-content: center;border-right: 2px solid #c4c4c4;padding-left: 2px;}
.colheads .corner{justify-content: flex-end;align-items: flex-end;padding: 0 4px 4px 0;}
.corner i{width: 0;height: 0;border-left: 18px solid transparent;border-bottom: 18px solid #b0b0b0;}
.colheads span:last-child{border-right: 0;}
.cells{height: 988px;overflow: hidden;display: grid;grid-template-columns: 41px 569px 372px 135px 137px 219px 220px 136px 134px 135px 139px 137px 137px 137px 135px;grid-auto-rows: 35.9px;border-top: 2px solid #8a8a8a;background: #fff repeating-linear-gradient(180deg,transparent 0,transparent 33.9px,#dcdcdc 33.9px,#dcdcdc 35.9px);font-family: Lato,"Liberation Sans",sans-serif;font-size: 23.5px;word-spacing: 1px;color: #111;}
.cells > b{font-weight: 400;background: #e6e6e6;border-right: 3px solid #9c9c9c;border-bottom: 2px solid #bdbdbd;text-align: center;line-height: 36px;color: #333;padding-right: 2px;font-size: 22px;word-spacing: 0;}
.cells > span{border-right: 1px solid #d6d6d6;border-bottom: 2px solid #dcdcdc;padding: 0 4px;line-height: 36px;white-space: nowrap;overflow: hidden;}
.cells .bd{font-weight: 700;font-size: 25.5px;}
.cells .sm{font-size: 21.7px;}
.cells .num{text-align: right;}
.cells .ctr{text-align: center;}
.cells .fill{background: #ffc000;border-right-color: #f6e4ae;border-bottom-color: #f6e4ae;}
.cells .solid{background: #ffc000;border-right-color: #ffc000;border-bottom-color: #ffc000;}
.cells .boxed{border: 2px solid #c9bc95;line-height: 32px;padding-left: 2px;}

.vscroll{flex: 1;display: flex;flex-direction: column;padding: 4px 3px 0 8px;}
.vbtn{height: 29px;flex: none;background: #fff;border: 2px solid #808080;display: flex;align-items: center;justify-content: center;}
.vthumb{height: 35px;flex: none;background: #fff;border: 2px solid #808080;border-top: 0;}
.vtrack{flex: 1;background: #dcdcdc;}
.tri-up{width: 0;height: 0;border-left: 8px solid transparent;border-right: 8px solid transparent;border-bottom: 8px solid #666;}
.tri-down{width: 0;height: 0;border-left: 6px solid transparent;border-right: 6px solid transparent;border-top: 12px solid #666;}

/* sheet tabs */
.sheetbar{height: 57px;flex: none;display: flex;align-items: flex-start;font-size: 25px;border-top: 2px solid #999;border-bottom: 3px solid #d6d6d6;}
.nav{width: 195px;height: 52px;display: flex;align-items: center;gap: 50px;padding-left: 49px;}
.nav i{width: 0;height: 0;border-top: 11px solid transparent;border-bottom: 11px solid transparent;}
.nav-l{border-right: 9px solid #bbb;}
.nav-r{border-left: 9px solid #1e6f42;}
.stabs{width: 1431px;height: 52px;flex: none;display: flex;align-items: center;overflow: hidden;}
.stab{display: block;padding: 0 26px;line-height: 40px;border-right: 2px solid #aaa;white-space: nowrap;flex: none;}
.stab-on{width: 374px;height: 50px;line-height: 46px;text-align: center;padding: 0;margin-right: 0;background: #fff;border: 2px solid #999;border-top: 0;border-bottom: 4px solid #1e6f42;color: #1e6f42;font-weight: 700;font-size: 24.5px;}
.stab-last{border-right: 0;padding-right: 0;}
.stab-last em{font-style: normal;font-weight: 700;color: #1e6f42;margin-left: 14px;}
.plus{flex: none;margin-top: 12px;}
.hdots{width: 73px;text-align: center;color: #aaa;line-height: 52px;}
.hscroll{width: 1059px;height: 30px;margin-top: 12px;flex: none;display: flex;}
.hbtn{width: 30px;flex: none;background: #fff;border: 2px solid #808080;display: flex;align-items: center;justify-content: center;}
.hthumb{width: 926px;flex: none;background: #fff;border: 2px solid #808080;border-left: 0;}
.htrack{flex: 1;background: #d0d0d0;}
.tri-left{width: 0;height: 0;border-top: 8px solid transparent;border-bottom: 8px solid transparent;border-right: 6px solid #666;}
.tri-right{width: 0;height: 0;border-top: 8px solid transparent;border-bottom: 8px solid transparent;border-left: 6px solid #666;}

/* status bar */
.status{height: 41px;flex: none;display: flex;align-items: center;background: #f3f2f1;font-size: 21px;padding-right: 44px;}
.st-ready{width: 146px;padding-left: 13px;}
.st-biz{margin-left: 10px;font-size: 21.7px;}
.st-views{margin-left: auto;display: flex;height: 41px;}
.st-view{width: 81px;display: flex;align-items: center;justify-content: center;}
.st-view-on{background: #d2d2d2;}
.zoom-m{width: 37px;text-align: center;}
.slider{position: relative;width: 200px;height: 4px;background: #666;}
.slider i{position: absolute;left: 81px;top: -15px;width: 8px;height: 34px;background: #666;}
.slider em{position: absolute;left: 100px;top: -7px;width: 2px;height: 18px;background: #666;}
.zoom-p{width: 34px;text-align: center;}
.zoom-v{margin-left: 15px;width: 51px;white-space: nowrap;}
```
